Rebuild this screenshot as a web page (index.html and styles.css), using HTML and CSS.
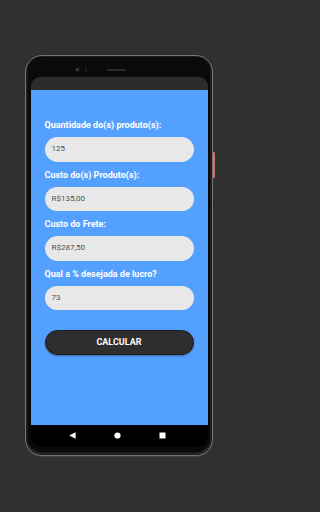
FILE: index.html
```html
<!DOCTYPE html>
<html lang="pt-BR">
<head>
<meta charset="utf-8">
<title>Calculadora de lucro</title>
<link rel="stylesheet" href="styles.css">
</head>
<body>
<div class="stage">
  <div class="phone">
    <span class="side-button"></span>
    <span class="side-dot"></span>
    <div class="top-bezel">
      <span class="camera"></span>
      <span class="sensor"></span>
      <span class="speaker"></span>
    </div>
    <div class="screen">
      <div class="statusbar"></div>
      <main class="app">
        <label class="field-label">Quantidade do(s) produto(s):</label>
        <div class="field">125</div>
        <label class="field-label">Custo do(s) Produto(s):</label>
        <div class="field">R$135,00</div>
        <label class="field-label">Custo do Frete:</label>
        <div class="field">R$287,50</div>
        <label class="field-label">Qual a % desejada de lucro?</label>
        <div class="field">73</div>
        <button class="calc-btn">CALCULAR</button>
      </main>
      <nav class="navbar">
        <svg class="nav-icon" width="7" height="7" viewBox="0 0 7 7"><path d="M0.3 3.5 L6.6 0.2 L6.6 6.8 Z" fill="#fff"/></svg>
        <svg class="nav-icon" width="7" height="7" viewBox="0 0 7 7"><circle cx="3.5" cy="3.5" r="3.1" fill="#fff"/></svg>
        <svg class="nav-icon" width="7" height="7" viewBox="0 0 7 7"><rect x="0.5" y="0.5" width="6" height="6" fill="#fff"/></svg>
      </nav>
    </div>
  </div>
</div>
</body>
</html>
```

FILE: styles.css
```css
* { box-sizing: border-box; }

html, body {
  margin: 0;
  padding: 0;
  background: #303030;
  width: 238px;
  height: 512px;
  overflow: hidden;
}

body {
  font-family: Roboto, "Liberation Sans", sans-serif;
}

.stage {
  padding: 55px 0 0 25px;
}

.phone {
  position: relative;
  width: 188px;
  height: 401px;
  border-radius: 17px;
  background: #0a0a0b;
  border: 1.5px solid #767676;
  box-shadow: inset 0 0 0 1px #1c1c1c, inset 0 -1px 0 1.5px #2a2a2a, 0 1px 1px #444;
  padding: 0 4.5px 0 4.5px;
}

.side-button {
  position: absolute;
  right: -3px;
  top: 96px;
  width: 2px;
  height: 26px;
  background: #d2745c;
  border-radius: 1px;
}

.side-dot {
  position: absolute;
  right: -3px;
  top: 147px;
  width: 1px;
  height: 1px;
  background: #111;
}

.top-bezel {
  height: 21px;
  display: flex;
  align-items: flex-start;
  padding: 11px 0 0 44px;
}

.camera {
  width: 5px;
  height: 5px;
  border-radius: 50%;
  background: radial-gradient(circle at 50% 50%, #3a3f55 0 1px, #15161c 1.5px);
}

.sensor {
  width: 2px;
  height: 5px;
  margin-left: 5px;
  border-radius: 1px;
  background: #1b1b1f;
}

.speaker {
  width: 19px;
  height: 2.5px;
  margin: 1.5px 0 0 20px;
  border-radius: 1px;
  background: #2a2a2e;
}

.screen {
  height: 369.5px;
  border-radius: 9px 9px 11px 11px;
  overflow: hidden;
  display: flex;
  flex-direction: column;
}

.statusbar {
  height: 13px;
  background: #2c2c2c;
  flex: none;
}

.app {
  flex: 1;
  background: #54a0ff;
  padding: 29px 14px 0 14px;
  display: flex;
  flex-direction: column;
}

.field-label {
  display: block;
  color: #fff;
  font-weight: 700;
  font-size: 9px;
  line-height: 12px;
  margin-bottom: 6px;
}

.field {
  height: 24.5px;
  border-radius: 12.5px;
  background: #e8e8e8;
  color: #505050;
  font-size: 8px;
  line-height: 24.5px;
  padding-left: 7px;
  margin-bottom: 7px;
}

.calc-btn {
  margin-top: 13px;
  height: 24.5px;
  border: 1px solid #1e1e1e;
  border-radius: 12.5px;
  background: #2e2e2e;
  color: #fff;
  font-family: Roboto, "Liberation Sans", sans-serif;
  font-weight: 700;
  font-size: 9px;
  padding: 0;
  box-shadow: 0 1px 2px rgba(0, 0, 0, 0.35);
}

.navbar {
  height: 22px;
  flex: none;
  background: #000;
  display: flex;
  align-items: center;
  padding: 0 0 1px 38.5px;
  gap: 38px;
}

.nav-icon {
  display: block;
}
```
